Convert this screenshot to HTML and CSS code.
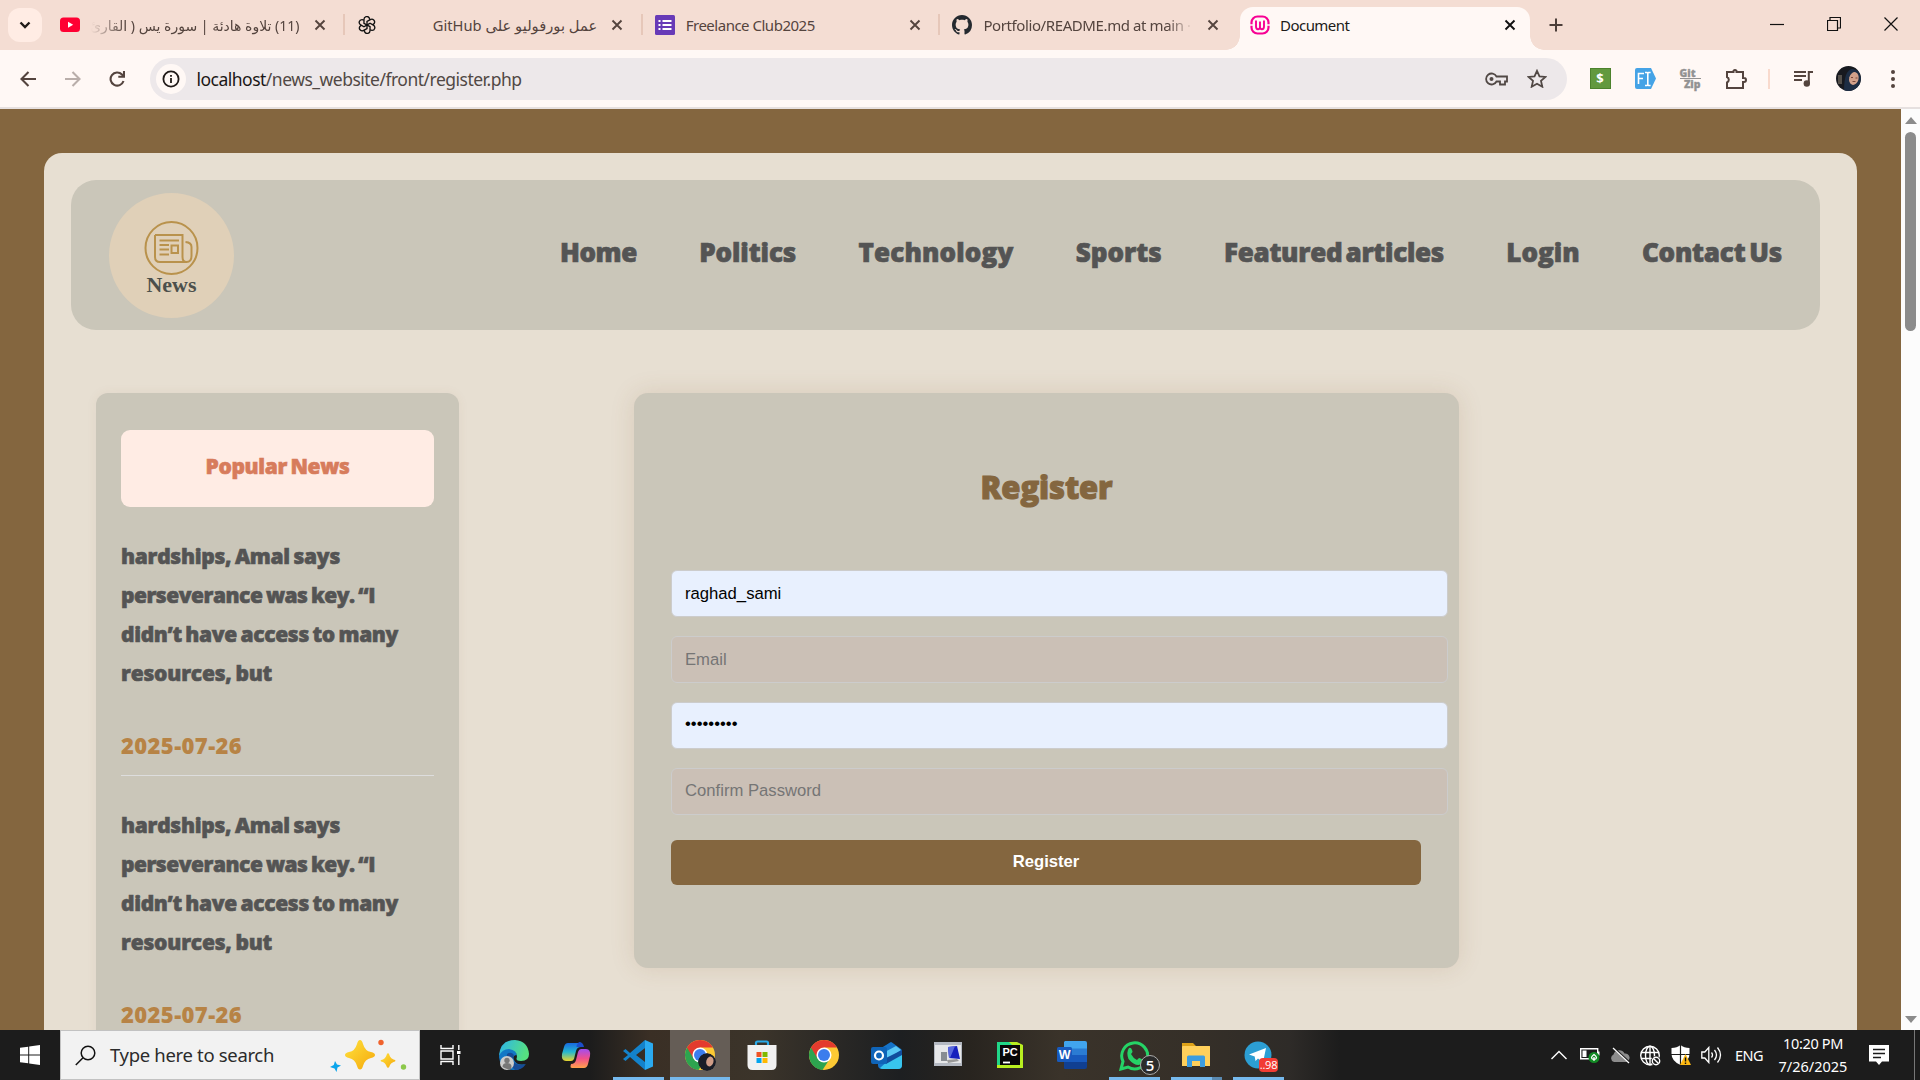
FILE: index.html
```html
<!DOCTYPE html>
<html lang="en">
<head>
<meta charset="utf-8">
<title>Document</title>
<link rel="stylesheet" href="styles.css">
</head>
<body>
<div class="tabstrip">
  <div class="tab-search"><svg width="12" height="8" viewBox="0 0 12 8"><path d="M1.5 1.5 6 6l4.500-4.500" fill="none" stroke="#201a18" stroke-width="2.400"/></svg></div>
  <div class="tab tab-first">
    <svg class="fav" width="20" height="20" viewBox="0 0 20 20"><rect y="2.500" width="20" height="14.500" rx="3.500" fill="#f03"/><path d="M8 6.700v6l5.200-3z" fill="#fff"/></svg>
    <span class="tab-title rtl fade-left" dir="rtl">(11) تلاوة هادئة | سورة يس ( القارئ</span>
    <svg class="x" width="12" height="12" viewBox="0 0 12 12"><path d="M1.500 1.500l9 9M10.500 1.500l-9 9"/></svg>
  </div>
  <div class="tab">
    <svg class="fav openai" width="18" height="18" viewBox="0 0 20 20" fill="none" stroke="#111" stroke-width="1.500"><g id="k"><path id="p" d="M10 10.800V6.100l3.700-2.100a3.100 3.100 0 0 1 4.300 4.200c-.4.700-.9 1.100-1.600 1.400"/><use href="#p" transform="rotate(60 10 10)"/><use href="#p" transform="rotate(120 10 10)"/></g><use href="#k" transform="rotate(180 10 10)"/></svg>
    <span class="tab-title rtl gh" dir="rtl">عمل بورفوليو على GitHub</span>
    <svg class="x" width="12" height="12" viewBox="0 0 12 12"><path d="M1.500 1.500l9 9M10.500 1.500l-9 9"/></svg>
  </div>
  <div class="tab">
    <svg class="fav" width="20" height="20" viewBox="0 0 20 20"><rect width="20" height="20" rx="1.500" fill="#673ab7"/><path d="M7.500 6h9M7.500 10h9M7.500 14h9" stroke="#fff" stroke-width="2"/><path d="M3.500 6h2M3.500 10h2M3.500 14h2" stroke="#fff" stroke-width="2"/></svg>
    <span class="tab-title t-free">Freelance Club2025</span>
    <svg class="x" width="12" height="12" viewBox="0 0 12 12"><path d="M1.500 1.500l9 9M10.500 1.500l-9 9"/></svg>
  </div>
  <div class="tab">
    <svg class="fav" width="20" height="20" viewBox="0 0 16 16"><path fill="#24292f" d="M8 0C3.580 0 0 3.580 0 8c0 3.540 2.290 6.530 5.470 7.590.4.070.55-.17.55-.38 0-.19-.01-.82-.01-1.490-2.010.37-2.530-.49-2.690-.94-.09-.23-.48-.94-.82-1.130-.28-.15-.68-.52-.01-.53.63-.01 1.080.58 1.230.82.72 1.210 1.870.87 2.330.66.07-.52.28-.87.51-1.070-1.780-.2-3.640-.89-3.640-3.950 0-.87.31-1.590.82-2.150-.08-.2-.36-1.020.08-2.120 0 0 .67-.21 2.200.82.64-.18 1.320-.27 2-.27s1.360.09 2 .27c1.530-1.040 2.200-.82 2.200-.82.44 1.100.16 1.920.08 2.120.51.56.82 1.270.82 2.150 0 3.070-1.870 3.750-3.650 3.950.29.25.54.73.54 1.480 0 1.070-.01 1.930-.01 2.200 0 .21.15.46.55.38A8.010 8.010 0 0 0 16 8c0-4.420-3.580-8-8-8z"/></svg>
    <span class="tab-title fade-right t-readme">Portfolio/README.md at main ·</span>
    <svg class="x" width="12" height="12" viewBox="0 0 12 12"><path d="M1.500 1.500l9 9M10.500 1.500l-9 9"/></svg>
  </div>
  <div class="tab active">
    <svg class="fav" width="20" height="20" viewBox="0 0 20 20" fill="none" stroke="#f70094"><rect x="1.500" y="1.500" width="17" height="17" rx="6" stroke-width="2.200"/><path d="M0 10h3M17 10h3" stroke="#fff8f5" stroke-width="1.500"/><path d="M6 5.500v6q0 2.700 2 2.700T10 12V6.500V12q0 2.200 2 2.200t2-2.700v-6" stroke-width="1.900"/></svg>
    <span class="tab-title t-doc">Document</span>
    <svg class="x" width="12" height="12" viewBox="0 0 12 12"><path d="M1.500 1.500l9 9M10.500 1.500l-9 9"/></svg>
  </div>
  <svg class="plus" width="14" height="14" viewBox="0 0 14 14"><path d="M7 .5v13M.5 7h13" stroke="#4d3f3a" stroke-width="2"/></svg>
  <div class="win">
    <svg width="14" height="14" viewBox="0 0 14 14"><path d="M0 7.500h14"/></svg>
    <svg width="14" height="14" viewBox="0 0 14 14"><path d="M.5 3.500h10v10H.5zM3 3V.5h10.500V11H11"/></svg>
    <svg width="14" height="14" viewBox="0 0 14 14"><path d="M.5.5l13 13M13.500.5l-13 13"/></svg>
  </div>
</div>
<div class="toolbar">
  <svg class="nav-ico" width="16" height="16" viewBox="0 0 16 16"><path d="M16 8H1.500M8.500 1 1.500 8l7 7" /></svg>
  <svg class="nav-ico off" width="16" height="16" viewBox="0 0 16 16"><path d="M0 8h14.500M7.500 1l7 7-7 7"/></svg>
  <svg class="nav-ico" width="16" height="16" viewBox="0 0 16 16"><path d="M14.500 10A6.600 6.600 0 1 1 13 3.500L15 5.500M15 0v5.700H9.300"/></svg>
  <div class="omnibox">
    <span class="info"><svg width="18" height="18" viewBox="0 0 18 18"><circle cx="9" cy="9" r="7.600" fill="none" stroke="#201a18" stroke-width="1.800"/><path d="M9 8v5M9 5v1.800" stroke="#201a18" stroke-width="1.800"/></svg></span>
    <span class="url"><b>localhost</b>/news_website/front/register.php</span>
    <svg class="key" width="23" height="14" viewBox="0 0 23 14" fill="none" stroke="#514845" stroke-width="1.800"><path d="M11.500 4.500A5.500 5.500 0 1 0 11.500 9.500H15v3h5V9.500h2V4.500z"/><circle cx="6.500" cy="7" r="2" fill="#514845" stroke="none"/></svg>
    <svg class="star" width="20" height="19" viewBox="0 0 20 19"><path d="M10 1.800l2.500 5.500 6 .6-4.500 4 1.300 5.800L10 14.700l-5.300 3 1.300-5.800-4.500-4 6-.6z" fill="none" stroke="#514845" stroke-width="1.800"/></svg>
  </div>
  <div class="exts">
    <span class="ext-dollar">$</span>
    <svg width="21" height="21" viewBox="0 0 21 21"><path d="M2 0h14l5 10.500L16 21H2q-2 0-2-2V2q0-2 2-2z" fill="#45a3e6"/><path d="M3.500 16V5.500H9M3.500 10.500H8M10 4.500h2l.8.800.8-.8h2M12.800 5.500v11M10 17.500h2l.8-.8.800.8h2" fill="none" stroke="#fff" stroke-width="1.600"/></svg>
    <span class="gitzip"><span>Git</span><span>Zip</span></span>
    <svg width="22" height="22" viewBox="0 0 22 22"><path d="M2 4h6.500V2.800a2 2 0 0 1 3 0V4H18v6h1a1.800 1.800 0 0 1 0 4h-1v6H2v-5.500a3 3 0 0 0 0-5.500z" fill="none" stroke="#54443e" stroke-width="2"/></svg>
  </div>
  <i class="tb-sep"></i>
  <svg class="media" width="20" height="18" viewBox="0 0 20 18"><path d="M0 2h12M0 6h12M0 10h8M14.800 13V2H19" fill="none" stroke="#54443e" stroke-width="2"/><circle cx="12.800" cy="13.500" r="3.200" fill="#54443e"/></svg>
  <svg class="avatar" width="25" height="25" viewBox="0 0 25 25"><clipPath id="c"><circle cx="12.500" cy="12.500" r="12.500"/></clipPath><g clip-path="url(#c)"><path d="M0 0h25v25H0z" fill="#17191f"/><path d="M2 9h4v9H2z" fill="#54504b"/><path d="M8 25q0-22 9-22 7 1 8 9l-2 13z" fill="#1d2d44"/><ellipse cx="18" cy="12.500" rx="4.700" ry="6.500" fill="#d3a18a" transform="rotate(15 18 12)"/><path d="M15 11.500h2M19.500 12h2M16.500 15.500h3" stroke="#7b4a3c"/></g></svg>
  <svg class="dots" width="4" height="18" viewBox="0 0 4 18" fill="#54443e"><circle cx="2" cy="2" r="2"/><circle cx="2" cy="9" r="2"/><circle cx="2" cy="16" r="2"/></svg>
</div>
<div class="viewport">
  <div class="page">
    <div class="container">
      <header class="header">
        <svg class="logo" width="125" height="125" viewBox="0 0 125 125"><circle cx="62.500" cy="62.500" r="62.500" fill="#e0d0b8"/><g fill="none" stroke="#b9924c" stroke-width="2"><circle cx="62.500" cy="55" r="26"/><path d="M46 42h27.500v22q0 5 4 5 5 0 5-6V54q0-4.500-6-5M77 69H51q-5 0-5-5V42"/><path d="M50.500 47.500H70M50.500 52H60M50.500 56.500H60M50.500 61.500H60M62.500 52.500h6.500v7.500h-6.500z"/></g><text x="37.500" y="98.500" textLength="50" lengthAdjust="spacingAndGlyphs">News</text></svg>
        <nav class="menu">
          <a class="m-home">Home</a><a class="m-pol">Politics</a><a class="m-tech">Technology</a><a>Sports</a><a class="m-feat">Featured articles</a><a>Login</a><a class="m-contact">Contact Us</a>
        </nav>
      </header>
      <main class="columns">
        <aside class="sidebar">
          <h2 class="popular">Popular News</h2>
          <article class="item">
            <p><span class="l1">hardships, Amal says</span><br><span class="l2">perseverance was key. “I</span><br><span class="l3">didn’t have access to many</span><br><span class="l4">resources, but</span></p>
            <time>2025-07-26</time>
          </article>
          <article class="item">
            <p><span class="l1">hardships, Amal says</span><br><span class="l2">perseverance was key. “I</span><br><span class="l3">didn’t have access to many</span><br><span class="l4">resources, but</span></p>
            <time>2025-07-26</time>
          </article>
        </aside>
        <section class="card">
          <h1>Register</h1>
          <form class="form">
            <input class="filled" type="text" value="raghad_sami">
            <input type="text" placeholder="Email">
            <input class="filled pw" type="text" value="•••••••••">
            <input type="text" placeholder="Confirm Password">
            <button type="button">Register</button>
          </form>
        </section>
      </main>
    </div>
  </div>
  <div class="scrollbar"><i class="up"></i><i class="thumb"></i><i class="down"></i></div>
</div>
<div class="taskbar">
  <div class="start"><svg width="20" height="20" viewBox="0 0 20 20" fill="#fff"><path d="M0 2.800 8.200 1.700v7.800H0zM9.200 1.500 20 0v9.500H9.200zM0 10.500h8.200v7.800L0 17.200zM9.200 10.500H20V20L9.200 18.500z"/></svg></div>
  <div class="search">
    <svg width="21" height="21" viewBox="0 0 21 21" fill="none" stroke="#111" stroke-width="1.500"><circle cx="13" cy="8" r="6.800"/><path d="M8 12.800.8 20"/></svg>
    <span class="search-text">Type here to search</span>
    <svg class="spark" width="80" height="40" viewBox="0 0 80 40"><defs><linearGradient id="y" x2="1" y2="1"><stop stop-color="#ffe23d"/><stop offset="1" stop-color="#f5a80c"/></linearGradient></defs><path d="M30 5q2 0 3 4 2 7 8 8 4 1 4 3t-4 3q-6 1-8 8-1 3.500-3 3.500T27 31q-2-7-8-8-4-1-4-3t4-3q6-1 8-8 1-4 3-4z" fill="url(#y)"/><path d="M58 18q1 0 2 3.500 1 2 3.500 3 2 .5 2 1.200t-2 1.200q-2.500 1-3.500 3Q59 33 58 33t-2-3q-1-2-3-3-2.500-.5-2.500-1.300T53 24.500q2-1 3-3Q57 18 58 18z" fill="url(#y)"/><path d="m5 26 2 3.500 4 1-3.500 2-1 4.500-2-3.500L0 32l3.800-2z" fill="#0ba5ec"/><circle cx="51" cy="7.500" r="2.700" fill="#f0622c"/><circle cx="73.500" cy="32" r="2.700" fill="#8cc84b"/></svg>
  </div>
  <div class="taskview"><svg width="21" height="20" viewBox="0 0 21 20" fill="none" stroke="#fff" stroke-width="1.400"><path d="M1 0v3.500h12V0M1 20v-3.500h12V20M1 6h12v8H1zM18.800 0v5M18.800 10v10"/><path d="M17 7.500h3.500" stroke-width="3"/></svg></div>
  <div class="apps">
    <div class="app"><svg width="32" height="32" viewBox="0 0 32 32"><defs><linearGradient id="e" x2="1" y2=".3"><stop stop-color="#2bb4ee"/><stop offset="1" stop-color="#56e080"/></linearGradient></defs><path d="M1 18Q1 9 9 9q8 0 10 7-5 0-3 5 3 6 11 4-4 6-11 6Q2 30 1 18z" fill="#1278c6"/><path d="M1 17Q2 1 17 1q13 1 14 14 0 7-8 7-6 0-4-4 0-7-8-8-7 0-10 7z" fill="url(#e)"/><path d="M9 15q-1 9 8 16 7 0 11-6-5 2-9 0-7-3-3-9-3-4-7-1z" fill="#174c96"/><circle cx="9" cy="24" r="7" fill="#ccc"/><circle cx="9" cy="21.500" r="2.700" fill="#777"/><path d="M4.500 28q0-4 4.500-4t4.500 4-4.500 2-4.500-2z" fill="#777"/></svg></div>
    <div class="app"><svg width="30" height="28" viewBox="0 0 30 28"><defs><linearGradient id="a" x2="0" y2="1"><stop stop-color="#1769e0"/><stop offset=".5" stop-color="#25b8d0"/><stop offset="1" stop-color="#e9d52c"/></linearGradient><linearGradient id="b" x2="0" y2="1"><stop stop-color="#a24df0"/><stop offset=".5" stop-color="#f0508c"/><stop offset="1" stop-color="#ffa24a"/></linearGradient></defs><path d="M7 2h12q2 0 1.500 2L20 6q-4 0-5 4l-2 8q-1 2-3 2H5q-5 0-4-7L3 6q1-4 4-4z" fill="url(#a)"/><path d="M18 1q4 0 5 5h-7q-2 0 2-5z" fill="#1c4ecb"/><path d="M23 27H11q-2 0-1.500-2l.5-2q4 0 5-4l2-8q1-3 3-3h5q5 0 4 7l-2 8q-1 4-4 4z" fill="url(#b)"/></svg></div>
    <div class="app run"><svg width="30" height="30" viewBox="0 0 30 30"><path d="M22 0v30L7 17l-4.500 4L0 19l5-4-5-4 2.500-2L7 13zM22 8l-9 7 9 7z" fill="#1382cb" fill-rule="evenodd"/><path d="M22 0l8 3.500v23L22 30z" fill="#2baaf0"/></svg></div>
    <div class="app run on"><svg width="32" height="32" viewBox="0 0 32 32"><g id="chr"><circle cx="16" cy="16" r="15" fill="#fcc934"/><path d="M16 16 3 8.500A15 15 0 0 0 14.500 31L22 19.500z" fill="#2da44f"/><path d="M3 8.500a15 15 0 0 1 26 0H16l-6.500 11z" fill="#e33b2e"/><circle cx="16" cy="16" r="7.500" fill="#fff"/><circle cx="16" cy="16" r="6" fill="#3b7ded"/></g><g clip-path="url(#d)"><clipPath id="d"><circle cx="23" cy="23" r="9"/></clipPath><circle cx="23" cy="23" r="9" fill="#191d27"/><ellipse cx="26" cy="22.500" rx="3.600" ry="5" fill="#cf9d87" transform="rotate(15 26 22)"/></g></svg></div>
    <div class="app"><svg width="30" height="30" viewBox="0 0 30 30"><path d="M9 6V3q0-1.500 1.500-1.500h9Q21 1.500 21 3v3" fill="none" stroke="#29a9e8" stroke-width="2.200"/><path d="M.5 5h29v20q0 5-5 5h-19q-5 0-5-5z" fill="#f1f1f1"/><path fill="#ef5325" d="M9.500 12h5v5h-5z"/><path fill="#7fb900" d="M15.500 12h5v5h-5z"/><path fill="#03a4ee" d="M9.500 18h5v5h-5z"/><path fill="#ffb800" d="M15.500 18h5v5h-5z"/></svg></div>
    <div class="app"><svg width="32" height="32" viewBox="0 0 32 32"><use href="#chr"/></svg></div>
    <div class="app"><svg width="31" height="28" viewBox="0 0 31 28"><path d="M7 9 19 1.500q1-.8 2 0L30 8q1 .8 1 2v14q0 4-4 4H11q-4 0-4-4z" fill="#1573c8"/><path d="m12 12 13-7 5 4-13 9z" fill="#5ac8f5"/><path d="m31 11-15 10q-4 3-7 6 1 1 3 1h15q4 0 4-4z" fill="#38c5ee"/><path d="m13 18 18-9v5L15 23z" fill="#124d9d"/><rect y="6" width="16" height="17" rx="2" fill="#0f64b8"/><circle cx="8" cy="14.500" r="4" fill="none" stroke="#fff" stroke-width="2.200"/></svg></div>
    <div class="app remote"><svg width="28" height="24" viewBox="0 0 28 24"><path d="M0 0h28v24H0z" fill="#b4b9c2"/><path d="M1 3h26v18H1z" fill="#e6e7e9"/><path d="m14 5 9-1 3 13-11-1z" fill="#1721bd"/><path d="M14 5l7-.8L16 16h-1z" fill="#5968dc"/><path d="M7 10h6v9H7z" fill="#888d93"/><path d="m13 18 10-1 2 2-11 2z" fill="#999"/></svg></div>
    <div class="app"><svg width="26" height="26" viewBox="0 0 26 26"><path d="M0 0h20l6 3v23H0z" fill="#b8ef20"/><path d="M0 0h12l4 4L3 23H0z" fill="#21d789"/><path d="M3 3h20v20H3z" fill="#080808"/><path d="M6 20.500h7" stroke="#fff" stroke-width="1.800"/><text x="5.500" y="13.500" class="pc">PC</text></svg></div>
    <div class="app"><svg width="30" height="28" viewBox="0 0 30 28"><path fill="#41a5ee" d="M8 0h20q2 0 2 2v6H7V1z"/><path fill="#2b7cd3" d="M7 7.500h23V14H7z"/><path fill="#185abd" d="M7 14h23v7H7z"/><path fill="#103f91" d="M7 21h23v5q0 2-2 2H8q-1 0-1-1z"/><rect y="6" width="15" height="15" rx="1.500" fill="#185abd"/><text x="1.700" y="18" class="w">W</text></svg></div>
    <div class="app run"><svg width="30" height="31" viewBox="0 0 30 31"><path d="M2 29 4 21.500A13 13 0 1 1 9 27z" fill="none" stroke="#25d366" stroke-width="3"/><path d="M10 8q2-1 3 2l.5 1.500q0 1-1.500 2.500 2 4 6 6 1.500-2 2.500-2l4 2q.5 4-5 5-5 0-10-6Q7 12 10 8z" fill="#25d366"/></svg><span class="badge">5</span></div>
    <div class="app run multi"><svg width="28" height="24" viewBox="0 0 28 24"><path d="M0 0h11l3 3h14v6H0z" fill="#dda219"/><path d="M1 3h26q1 0 1 1v19H0V4q0-1 1-1z" fill="#ffd05b"/><path d="M5 24V14q0-1.500 1.500-1.500h15q1.500 0 1.500 1.500v10h-5v-6h-8v6z" fill="#3c9de0"/></svg></div>
    <div class="app run"><svg width="28" height="28" viewBox="0 0 28 28"><circle cx="14" cy="14" r="13.500" fill="#2c9ed3"/><path d="M5 13.500 22 7l-3 14.500-5-4-2.500 2.500-.8-4.500z" fill="#fff"/></svg><span class="count">..98</span></div>
  </div>
  <div class="tray">
    <svg width="16" height="10" viewBox="0 0 16 10" fill="none" stroke="#fff" stroke-width="1.400"><path d="m.5 9 7.500-7.500L15.500 9"/></svg>
    <svg width="20" height="16" viewBox="0 0 20 16"><path d="M.7 1.700h17v10H.7z" fill="none" stroke="#fff" stroke-width="1.400"/><path d="M2.500 3.500h4v6.500h-4zM18 4.500h1.500v4H18z" fill="#fff"/><circle cx="14" cy="10.500" r="5.500" fill="#128a24"/><path d="M14 7.500q-5 4 0 5 5-1 0-5zM14 10v4" fill="none" stroke="#fff" stroke-width="1.300"/></svg>
    <svg width="20" height="17" viewBox="0 0 20 17"><path d="M4 15a4 4 0 0 1-.5-7.500 6 6 0 0 1 11-1A4.300 4.300 0 0 1 16 15z" fill="#8c8c8c"/><path d="m3 .5 16 14.500" stroke="#1c1c1c" stroke-width="2.200"/><path d="m3 1 16 15" stroke="#fff" stroke-width="1.200"/></svg>
    <svg width="21" height="21" viewBox="0 0 21 21" fill="none" stroke="#fff" stroke-width="1.400"><circle cx="10" cy="10.500" r="9.300"/><ellipse cx="10" cy="10.500" rx="4.500" ry="9.300"/><path d="M1 7.500h18M1 13.500h11M10 1v18"/><circle cx="16" cy="16" r="5" fill="#1c1c1c" stroke="none"/><circle cx="16" cy="16" r="3.700"/><path d="m13.500 13.500 5 5"/></svg>
    <svg width="20" height="20" viewBox="0 0 20 20"><path d="M9.500 0Q13 3 18.500 3v6q0 7-9 11Q.5 16 .5 9V3Q6 3 9.500 0z" fill="#fff"/><path d="M9.500 0v20M0 9.500h19" stroke="#1c1c1c" stroke-width="1.200"/><path d="M14.500 9 20 20H9z" fill="#fdb913"/><path d="M14.500 12.500v4M14.500 17.500v1.500" stroke="#111" stroke-width="1.400"/></svg>
    <svg width="21" height="18" viewBox="0 0 21 18" fill="none" stroke="#fff" stroke-width="1.300"><path d="M.8 6h3l4-4.500v15L3.800 12h-3z"/><path d="M10.500 6.500q2 2.500 0 5M13.500 4q4 5 0 10M16.500 1.500q6 7.500 0 15"/></svg>
    <span class="lang">ENG</span>
  </div>
  <div class="clock"><span class="time">10:20 PM</span><span>7/26/2025</span></div>
  <svg class="note" width="20" height="20" viewBox="0 0 20 20"><path d="M0 0h20v16.500h-7L10 20l-3-3.500H0z" fill="#fff"/><path d="M4 4.500h12M4 8.500h12M4 12.500h8" stroke="#1c1c1c" stroke-width="1.300"/></svg>
  <i class="peek"></i>
</div>
</body>
</html>
```
FILE: styles.css
```css
* { box-sizing: border-box; }
body { margin: 0; width: 1920px; height: 1080px; overflow: hidden; display: flex; flex-direction: column; font-family: "Open Sans", "DejaVu Sans", sans-serif; }
svg { flex: none; display: block; }

/* browser tabs */
.tabstrip { height: 50px; flex: none; background: #f4ddd3; display: flex; padding-left: 8px; font: 15px "Noto Sans", "DejaVu Sans", sans-serif; color: #54443e; }
.tab-search { width: 34px; height: 34px; flex: none; margin-top: 8px; border-radius: 12px; background: #ffece4; display: flex; align-items: center; justify-content: center; }
.tab { width: 297.700px; height: 50px; flex: none; padding: 0 18.500px 0 13px; display: flex; align-items: center; position: relative; }
.tab-first { width: 302px; padding-left: 18px; }
.tab:not(.active)::after { content: ""; position: absolute; right: -1px; top: 14px; width: 2px; height: 21px; background: #e6c7b9; }
.tab:nth-child(5)::after { display: none; }
.openai { margin: 0 1px; }
.tab-title { flex: 1; min-width: 0; margin: 0 14px 0 11px; white-space: nowrap; overflow: hidden; }
.rtl { font-size: 14px; }
.rtl.gh { font-size: 14.700px; }
.fade-left { -webkit-mask-image: linear-gradient(90deg, transparent, #000 34px); }
.fade-right { -webkit-mask-image: linear-gradient(270deg, transparent, #000 26px); }
.t-free { letter-spacing: -.49px; }
.t-readme { letter-spacing: -.4px; }
.t-doc { letter-spacing: -.55px; }
.x { fill: none; stroke: #54443e; stroke-width: 1.900; }
.active { width: 290px; height: 43px; margin: 7px 0 0 3px; padding: 0 14px 7px 10px; background: #fff8f5; border-radius: 13px 13px 0 0; color: #201a18; }
.active .tab-title { margin-left: 10px; }
.active .x { stroke: #111; }
.active::before, .active::after { content: ""; position: absolute; bottom: 0; width: 14px; height: 14px; }
.active::before { left: -14px; background: radial-gradient(circle at 0 0, transparent 13.500px, #fff8f5 14px); }
.active::after { right: -14px; background: radial-gradient(circle at 100% 0, transparent 13.500px, #fff8f5 14px); }
.plus { margin: 18px 0 0 19px; }
.win { margin: 17px 22px 0 auto; display: flex; gap: 43px; }
.win path { fill: none; stroke: #111; stroke-width: 1.200; }

.toolbar { height: 59px; flex: none; background: #fff8f5; border-bottom: 2px solid #e6e0df; display: flex; align-items: center; padding-left: 20px; }
.nav-ico { margin-right: 28.500px; fill: none; stroke: #54443e; stroke-width: 2.100; }
.nav-ico.off { stroke: #b9aeaa; }
.omnibox { width: 1417px; height: 42px; margin-left: -4px; border-radius: 21px; background: #ede8ea; display: flex; align-items: center; padding: 0 20px 0 6px; }
.info { width: 30px; height: 30px; border-radius: 50%; background: #fff8f5; display: flex; align-items: center; justify-content: center; }
.url { flex: 1; margin-left: 11px; font: 17.500px "Noto Sans", sans-serif; letter-spacing: -.51px; color: #514845; }
.url b { font-weight: 400; color: #1b1716; }
.star { margin-left: 19px; }
.exts { display: flex; align-items: center; gap: 24px; margin-left: 23px; }
.ext-dollar { width: 21px; height: 21px; background: #62993e; border: 1px solid #4c822c; color: #fff; font: bold 13px/19px "Open Sans", sans-serif; text-align: center; }
.gitzip { width: 21px; height: 22px; font: 800 10.500px/10px "Open Sans", sans-serif; color: #929292; display: flex; flex-direction: column; -webkit-text-stroke: .3px; }
.gitzip span:first-child { border-bottom: 1px solid #929292; height: 11px; }
.gitzip span:last-child { text-align: right; }
.tb-sep { width: 2px; height: 20px; background: #f9dacd; margin-left: 21px; }
.media { margin-left: 24px; }
.avatar { margin-left: 22px; }
.dots { margin-left: 30px; }

/* news site */
.viewport { height: 921px; flex: none; display: flex; overflow: hidden; }
.page { width: 1901px; background: #84663f; padding: 44px 44px 0; }
.container { height: 1100px; background: #e7dfd2; border-radius: 18px; padding: 27px 37px 0 27px; }
.header { height: 150px; border-radius: 25px; background: #cac6b9; display: flex; align-items: center; justify-content: space-between; padding: 0 38px; }
.logo text { font: bold 21px "Liberation Serif", serif; fill: #4d504c; }
.menu { display: flex; gap: 62.300px; font: 800 26px/36px "Open Sans", sans-serif; color: #545454; padding-bottom: 6px; -webkit-text-stroke: .7px; }
.m-home { letter-spacing: -.39px; }
.m-pol { letter-spacing: -.09px; }
.m-tech { letter-spacing: .156px; }
.m-feat { letter-spacing: -.28px; word-spacing: -3.400px; }
.m-contact { letter-spacing: -.22px; word-spacing: -2.600px; }
.columns { display: flex; align-items: flex-start; margin: 63px 0 0 25px; }
.sidebar { width: 363px; height: 800px; background: #cac6b9; border-radius: 12px; padding: 37px 25px; box-shadow: 0 0 12px rgba(132, 90, 50, .06); }
.popular { height: 77px; margin: 0; border-radius: 9px; background: #ffece4; color: #d77c5c; text-align: center; font: 800 21px/72px "Open Sans", sans-serif; letter-spacing: -.35px; word-spacing: -1.700px; -webkit-text-stroke: .6px; }
.item { height: 269px; border-bottom: 1px solid #ddd; padding-top: 30px; font: 800 21px/39px "Open Sans", sans-serif; color: #545454; }
.item p { margin: 0 0 33px; white-space: nowrap; -webkit-text-stroke: .6px; }
.l1 { letter-spacing: -.29px; word-spacing: -1.500px; }
.l2 { letter-spacing: -.49px; word-spacing: -1.500px; }
.l3 { letter-spacing: -.345px; word-spacing: -1.500px; }
.l4 { letter-spacing: -.2px; word-spacing: -1.500px; }
.item time { display: block; color: #b78345; font-size: 22px; letter-spacing: .4px; }
.card { width: 825px; height: 575px; margin-left: 175px; border-radius: 14px; background: #cac6b9; padding: 70px 37px 0; box-shadow: 0 0 25px rgba(132, 90, 50, .15); }
.card h1 { margin: 0; text-align: center; font: 800 31px/48px "Open Sans", sans-serif; letter-spacing: -.13px; color: #84663f; -webkit-text-stroke: 1px; }
.form { display: flex; flex-direction: column; padding-top: 59px; }
.form input { width: 777px; height: 47px; margin: 0 0 19px; border: 1px solid #ccc; border-radius: 6px; background: #cbc0b6; padding: 0 13px 1px; font: 16.670px "Liberation Sans", Arial, sans-serif; color: #000; }
.form input::placeholder { color: #757575; opacity: 1; }
.form input:nth-child(-n+2) { padding: 1px 13px 0; }
.form .filled { background: #e8f0fe; }
.form .pw { padding-bottom: 3px; }
.form button { height: 45px; width: 750px; margin-top: 6px; border: 0; border-radius: 6px; background: #84663f; color: #fff; font: bold 16.670px "Liberation Sans", Arial, sans-serif; padding-bottom: 3px; }
.scrollbar { width: 19px; background: #fcfcfc; display: flex; flex-direction: column; align-items: center; padding: 8px 0 7px; }
.up, .down { border: 6.500px solid transparent; border-top: 0; border-bottom: 7px solid #8b8b8b; }
.down { transform: scaleY(-1); margin-top: auto; }
.thumb { width: 11px; height: 199px; margin-top: 8px; border-radius: 6px; background: #8b8b8b; }

/* taskbar */
.taskbar { height: 50px; flex: none; display: flex; align-items: center; background: linear-gradient(90deg, #1c1c1c 590px, #3a2f25 650px, #3b342a 760px, #2b2926 830px, #1d1f21 900px, #28241f 970px, #3a332a 1060px, #352f28 1200px, #2e2b28 1290px, #1c1c1c 1340px); color: #fff; }
.start { width: 60px; display: flex; justify-content: center; }
.search { width: 360px; height: 50px; background: #f2f2f2; border: 1px solid #c2c2c2; display: flex; align-items: center; padding-left: 14px; }
.search-text { margin: 0 0 2px 14px; width: 220px; font: 18.500px "Noto Sans", sans-serif; letter-spacing: -.33px; color: #2b2b2b; }
.taskview { width: 63px; display: flex; justify-content: center; padding-right: 3px; }
.apps { display: flex; height: 50px; }
.app { width: 62px; display: flex; align-items: center; justify-content: center; position: relative; }
.remote { padding-bottom: 3px; }
.run::after { content: ""; position: absolute; left: 6px; right: 5px; bottom: 0; height: 3px; background: #76b9ed; }
.on { background: linear-gradient(90deg, transparent 1px, #655d56 1px, #655d56 61px, transparent 61px); }
.on::after { left: 1px; right: 1px; }
.multi::after { background: linear-gradient(90deg, #76b9ed 41px, #5a89b0 41px); }
.badge { position: absolute; right: 5px; bottom: 5px; width: 20px; height: 20px; border-radius: 50%; background: #2b2b2b; border: 1px solid #aaa; font: 600 15px/18px "Open Sans", sans-serif; text-align: center; }
.count { position: absolute; right: 11px; bottom: 8px; width: 19px; height: 14px; border-radius: 4px; background: #f23c34; font: 11px/14px "Open Sans", sans-serif; letter-spacing: -.2px; text-align: center; }
.pc { font: bold 11px "Liberation Sans", sans-serif; fill: #fff; }
.w { font: bold 12.500px "Liberation Sans", sans-serif; fill: #fff; }
.tray { margin-left: auto; display: flex; align-items: center; gap: 10px; }
.tray svg:first-child { margin-right: 3px; }
.lang { font: 14.500px "Noto Sans", sans-serif; letter-spacing: -.55px; margin-left: 3px; }
.clock { width: 100px; display: flex; flex-direction: column; align-items: center; font: 14.500px/23px "Noto Sans", sans-serif; padding-bottom: 1px; }
.time { letter-spacing: -.35px; }
.note { margin: 0 25px 0 6px; }
.peek { width: 1px; height: 50px; background: #777; margin-right: 5px; }
```
